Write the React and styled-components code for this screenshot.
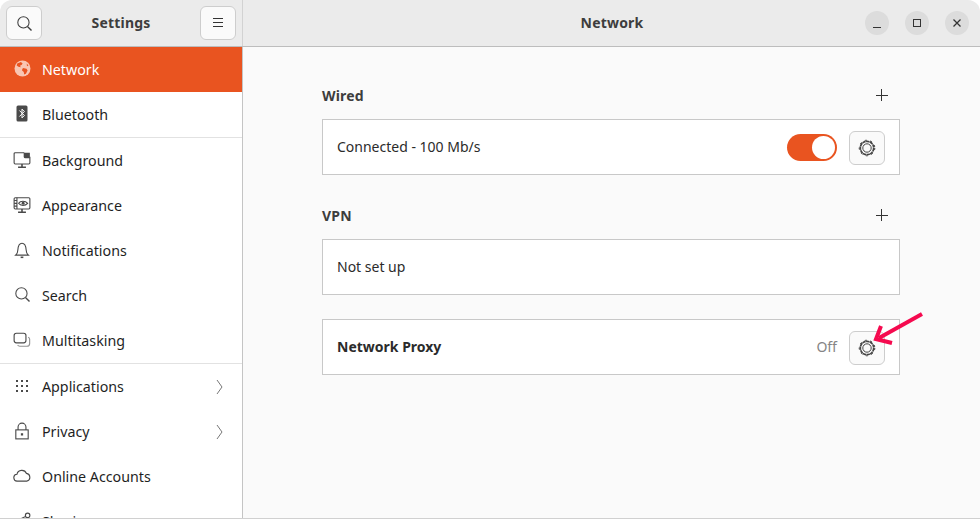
import React from 'react';
import styled, { createGlobalStyle } from 'styled-components';

const Global = createGlobalStyle`
  html, body { margin: 0; padding: 0; background: #fff; }
  body { font-family: "Noto Sans", "Open Sans", sans-serif; font-size: 14px; color: #2e2e2e; }
`;

const Window = styled.div`
  width: 980px;
  height: 518px;
  display: flex;
  flex-direction: column;
  overflow: hidden;
  background: #fafafa;
  border-bottom: 1px solid #d0d0d0;
  border-radius: 12px 12px 0 0;
`;

const Header = styled.header`
  height: 46px;
  flex: none;
  display: flex;
  background: #ebebeb;
  border-bottom: 1px solid #bdbdbd;
`;

const SideHeader = styled.div`
  width: 230px;
  flex: none;
  padding: 6px 6px 0;
  display: flex;
  justify-content: space-between;
  align-items: flex-start;
  border-right: 1px solid #d2d2d2;
`;

const Title = styled.div`
  flex: 1;
  text-align: center;
  font-weight: 700;
  font-size: 14px;
  letter-spacing: 0.2px;
  line-height: 34px;
  color: #3d3d3d;
`;

const HeadButton = styled.button`
  width: 36px;
  height: 34px;
  padding: 0;
  display: flex;
  align-items: center;
  justify-content: center;
  background: #fafafa;
  border: 1px solid #cdcdcd;
  border-radius: 6px;
  color: #3d3d3d;
`;

const MainHeader = styled.div`
  flex: 1;
  display: flex;
  align-items: flex-start;
  padding: 6px 7px 0 0;
`;

const MainTitle = styled(Title)`
  padding-left: 116px;
`;

const WinControls = styled.div`
  display: flex;
  gap: 16px;
  margin-top: 5px;
  margin-right: 4px;
`;

const WinButton = styled.div`
  width: 24px;
  height: 24px;
  border-radius: 50%;
  background: #dcdcdc;
  display: flex;
  align-items: center;
  justify-content: center;
  color: #333;
`;

const Body = styled.div`
  flex: 1;
  display: flex;
  min-height: 0;
`;

const Sidebar = styled.nav`
  width: 242px;
  flex: none;
  background: #fff;
  border-right: 1px solid #c4c4c4;
  overflow: hidden;
`;

const Item = styled.div`
  height: 45px;
  display: flex;
  align-items: center;
  padding: 0 19px 0 13px;
  gap: 11px;
  font-size: 14.25px;
  line-height: 43px;
  background: ${p => (p.$active ? '#e95420' : 'transparent')};
  color: ${p => (p.$active ? '#fff' : '#1f1f1f')};
  border-bottom: ${p => (p.$divider ? '1px solid #e2e2e2' : 'none')};
`;

const ItemIcon = styled.span`
  width: 18px;
  height: 18px;
  flex: none;
  display: flex;
  align-items: center;
  justify-content: center;
  margin-top: -2px;
  color: ${p => (p.$active ? '#f9c6b2' : '#4a4a4a')};
`;

const ItemLabel = styled.span`
  flex: 1;
  height: 43px;
`;

const Content = styled.main`
  flex: 1;
  padding: 35px 80px 0 79px;
`;

const SectionHead = styled.div`
  height: 26px;
  display: flex;
  align-items: center;
  justify-content: space-between;
  padding-right: 12px;
  margin-bottom: 11px;
  font-weight: 700;
  font-size: 14px;
  letter-spacing: 0.2px;
  color: #3d3d3d;
`;

const Card = styled.div`
  position: relative;
  height: 54px;
  display: flex;
  align-items: center;
  gap: 12px;
  padding: 0 14px;
  background: #fff;
  border: 1px solid #c8c8c8;
  margin-bottom: ${p => p.$gap || 0}px;
`;

const CardLabel = styled.span`
  flex: 1;
  font-size: 14px;
  line-height: 20px;
  margin-top: -1px;
  font-weight: ${p => (p.$bold ? 700 : 400)};
  color: #2b2b2b;
`;

const Toggle = styled.div`
  width: 50px;
  height: 27px;
  box-sizing: border-box;
  padding: 2px;
  border-radius: 14px;
  background: #e95420;
  display: flex;
  justify-content: flex-end;
`;

const Knob = styled.div`
  width: 23px;
  height: 23px;
  border-radius: 50%;
  background: #fff;
`;

const GearButton = styled(HeadButton)`
  margin-top: 1px;
`;

const OffText = styled.span`
  color: #858585;
  font-size: 14px;
  margin-top: -1px;
`;

const Arrow = styled.svg`
  position: absolute;
  left: 540px;
  top: -15px;
  pointer-events: none;
`;

const Svg = ({ size = 18, children }) => (
  <svg width={size} height={size} viewBox="0 0 16 16" fill="none" stroke="currentColor" strokeWidth="1">
    {children}
  </svg>
);

const SearchIcon = () => (
  <Svg size={17}>
    <circle cx="7" cy="7" r="5.3" />
    <path d="M11 11l3.6 3.6" strokeWidth="1.3" />
  </Svg>
);

const GlobeIcon = () => (
  <svg width="17" height="17" viewBox="0 0 16 16">
    <circle cx="8" cy="8" r="7.5" fill="currentColor" />
    <path d="M3 3.4l3.5-1.6 1.6 1.4-1 1.6-1.3.4.4 1.7-2-.5-1.7-1.3zM8.4 7.6l3.4.6 1 1.6-1.6 3.2-1.6.7-.4-2.5-1.8-1.6zM12 3.4l1.6 1.8-1.4.6z" fill="#e95420" />
  </svg>
);

const BluetoothIcon = () => (
  <svg width="12" height="17" viewBox="0 0 12 17">
    <rect x="0.5" y="0.5" width="11" height="16" rx="1.5" fill="#4a4a4a" />
    <path d="M3.4 5.5l5 5-2.4 2.4V4.1l2.4 2.4-5 5" fill="none" stroke="#fff" strokeWidth="1" />
  </svg>
);

const BackgroundIcon = () => (
  <Svg>
    <path d="M10 1.5H2a1 1 0 0 0-1 1V10.5a1 1 0 0 0 1 1h12a1 1 0 0 0 1-1V5" />
    <path d="M9.5 1.5h5.5v5h-4a1.5 1.5 0 0 1-1.5-1.5z" fill="currentColor" stroke="none" />
    <path d="M8 11.5v2.5M4.5 14.5h7" strokeWidth="1.4" />
  </Svg>
);

const AppearanceIcon = () => (
  <Svg>
    <rect x="1" y="1.5" width="14" height="10" rx="1" />
    <path d="M1 4h2.5M1 6.5h2.5M1 9h2.5M3.5 1.5v10" />
    <path d="M5 6.5c1.5-2.4 6-2.4 8 0-2 2.4-6.5 2.4-8 0z" />
    <circle cx="9" cy="6.5" r="1.3" fill="currentColor" stroke="none" />
    <path d="M8 11.5v2.5M4.5 14.5h7" strokeWidth="1.4" />
  </Svg>
);

const BellIcon = () => (
  <Svg>
    <path d="M2.5 12.5h11c-1.3-1-1.7-2.5-1.8-4.5C11.5 5 11 2 8 2S4.5 5 4.3 8c-.1 2-.5 3.5-1.8 4.5z" />
    <path d="M6.8 14.5h2.4" strokeWidth="1.4" />
  </Svg>
);

const TaskIcon = () => (
  <Svg>
    <rect x="1" y="2" width="10.5" height="8.5" rx="2" />
    <path d="M13.5 5.5c.8.3 1.3 1 1.3 1.8v3.7a2.5 2.5 0 0 1-2.5 2.5H6c-.8 0-1.5-.4-1.9-1" opacity="0.6" />
  </Svg>
);

const GridIcon = () => (
  <svg width="16" height="16" viewBox="0 0 16 16" fill="currentColor">
    {[2, 7, 12].flatMap(y =>
      [2, 7, 12].map(x => <rect key={`${x}-${y}`} x={x} y={y} width="2" height="2" />)
    )}
  </svg>
);

const LockIcon = () => (
  <Svg>
    <rect x="2.5" y="7" width="11" height="8" />
    <path d="M4.5 7V4.5a3.5 3.5 0 0 1 7 0V7" />
    <rect x="7" y="10" width="2" height="2" fill="currentColor" stroke="none" />
  </Svg>
);

const CloudIcon = () => (
  <Svg>
    <path d="M4 12.5a3 3 0 0 1-.5-6 4.5 4.5 0 0 1 8.5-.8 3.5 3.5 0 0 1 .5 6.8z" />
  </Svg>
);

const ShareIcon = () => (
  <Svg>
    <circle cx="3" cy="8" r="2" />
    <circle cx="13" cy="3" r="2" />
    <circle cx="13" cy="13" r="2" />
    <path d="M4.8 7.1l6.4-3.2M4.8 8.9l6.4 3.2" />
  </Svg>
);

const Chevron = () => (
  <svg width="7" height="16" viewBox="0 0 7 16" fill="none" stroke="#777" strokeWidth="1">
    <path d="M1 1l5 7-5 7" />
  </svg>
);

const GearIcon = () => (
  <svg width="18" height="18" viewBox="0 0 18 18" fill="none" stroke="#444">
    <circle cx="9" cy="9" r="6.7" strokeWidth="1.7" strokeDasharray="3.4 0.4" />
    <circle cx="9" cy="9" r="4.2" strokeWidth="1" />
    <circle cx="9" cy="9" r="7.8" strokeWidth="1" strokeDasharray="2 3.7" />
  </svg>
);

const Plus = () => (
  <svg width="12" height="12" viewBox="0 0 12 12" stroke="#333" strokeWidth="1">
    <path d="M0 6.5h12M5.5 0v12" />
  </svg>
);

const items = [
  { label: 'Network', icon: <GlobeIcon />, active: true },
  { label: 'Bluetooth', icon: <BluetoothIcon />, divider: true },
  { label: 'Background', icon: <BackgroundIcon /> },
  { label: 'Appearance', icon: <AppearanceIcon /> },
  { label: 'Notifications', icon: <BellIcon /> },
  { label: 'Search', icon: <SearchIcon /> },
  { label: 'Multitasking', icon: <TaskIcon />, divider: true },
  { label: 'Applications', icon: <GridIcon />, more: true },
  { label: 'Privacy', icon: <LockIcon />, more: true },
  { label: 'Online Accounts', icon: <CloudIcon /> },
  { label: 'Sharing', icon: <ShareIcon /> },
];

const App = () => (
  <>
    <Global />
    <Window>
      <Header>
        <SideHeader>
          <HeadButton><SearchIcon /></HeadButton>
          <Title>Settings</Title>
          <HeadButton>
            <svg width="12" height="10" viewBox="0 0 12 10" stroke="#333" strokeWidth="1">
              <path d="M1 .5h10M1 4.5h10M1 8.5h10" />
            </svg>
          </HeadButton>
        </SideHeader>
        <MainHeader>
          <MainTitle>Network</MainTitle>
          <WinControls>
            <WinButton>
              <svg width="10" height="10" viewBox="0 0 10 10" stroke="currentColor"><path d="M1 9.5h8" /></svg>
            </WinButton>
            <WinButton>
              <svg width="10" height="10" viewBox="0 0 10 10" fill="none" stroke="currentColor"><rect x="1.5" y="1.5" width="7" height="7" /></svg>
            </WinButton>
            <WinButton>
              <svg width="10" height="10" viewBox="0 0 10 10" stroke="currentColor" strokeWidth="1.3"><path d="M1.5 1.5l7 7M8.5 1.5l-7 7" /></svg>
            </WinButton>
          </WinControls>
        </MainHeader>
      </Header>
      <Body>
        <Sidebar>
          {items.map(item => (
            <Item key={item.label} $active={item.active} $divider={item.divider}>
              <ItemIcon $active={item.active}>{item.icon}</ItemIcon>
              <ItemLabel>{item.label}</ItemLabel>
              {item.more && <Chevron />}
            </Item>
          ))}
        </Sidebar>
        <Content>
          <SectionHead>Wired<Plus /></SectionHead>
          <Card $gap={27}>
            <CardLabel>Connected - 100 Mb/s</CardLabel>
            <Toggle><Knob /></Toggle>
            <GearButton><GearIcon /></GearButton>
          </Card>
          <SectionHead>VPN<Plus /></SectionHead>
          <Card $gap={24}>
            <CardLabel>Not set up</CardLabel>
          </Card>
          <Card>
            <CardLabel $bold>Network Proxy</CardLabel>
            <OffText>Off</OffText>
            <GearButton><GearIcon /></GearButton>
            <Arrow width="70" height="50" viewBox="0 0 70 50" fill="none" stroke="#f50a4f" strokeWidth="4">
              <path d="M59 9L16 33" />
              <path d="M18 21l-5 13 16 4" />
            </Arrow>
          </Card>
        </Content>
      </Body>
    </Window>
  </>
);

export default App;
